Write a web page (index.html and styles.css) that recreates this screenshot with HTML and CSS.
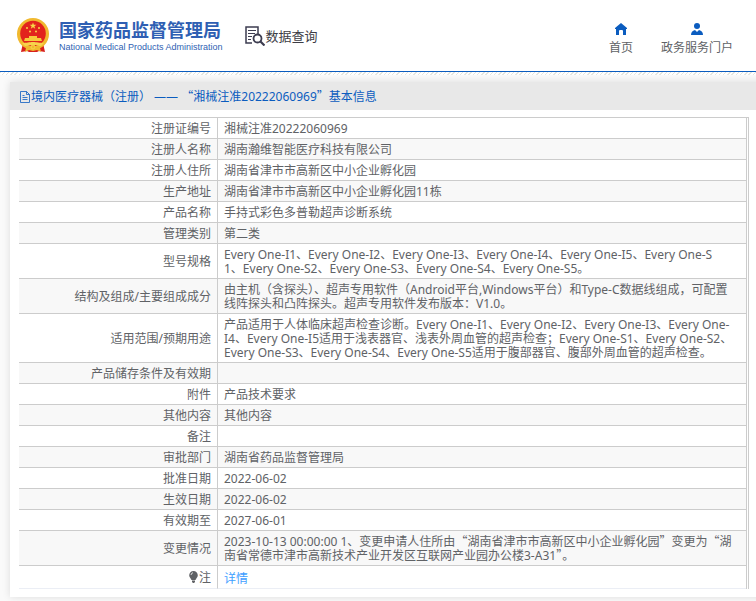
FILE: index.html
```html
<!DOCTYPE html>
<html lang="zh-CN">
<head>
<meta charset="utf-8">
<title>国家药品监督管理局 数据查询</title>
<link rel="stylesheet" href="styles.css">
</head>
<body>
<header class="top">
  <a class="brand" href="#">
    <svg class="emblem" viewBox="0 0 32 35" aria-hidden="true">
      <path d="M6 25h20l2 9-6-1-2 1h-8l-2-1-6 1z" fill="#d8201c"/>
      <circle cx="16" cy="16" r="16" fill="#f1b92f"/>
      <circle cx="16" cy="15.500" r="12.800" fill="#e2231d"/>
      <path d="M16 4.500l.9 2.300h2.500l-2 1.500.8 2.500-2.200-1.500-2.200 1.500.8-2.500-2-1.500h2.500z" fill="#f9d648"/>
      <g fill="#f9d648"><circle cx="10" cy="10" r="1"/><circle cx="22" cy="10" r="1"/><circle cx="13" cy="13.500" r="1"/><circle cx="19" cy="13.500" r="1"/></g>
      <path d="M12 18h8v2h4l1 3H7l1-3h4z" fill="#f7c93b"/>
      <path d="M5 25c5 0 7-1 11-1s6 1 11 1l-3 3c-3 0-4-1-8-1s-5 1-8 1z" fill="#f7d34c"/>
      <path d="M9 30l7-2 7 2 1 4-4-2-4 1-4-1-4 2z" fill="#f1b92f"/>
      <circle cx="16" cy="29" r="2" fill="#f1b92f" stroke="#f7d34c"/>
    </svg>
    <span class="names">
      <strong class="name-zh">国家药品监督管理局</strong>
      <span class="name-en">National Medical Products Administration</span>
    </span>
  </a>
  <a class="query" href="#">
    <svg class="query-icon" viewBox="0 0 20 20" fill="none" stroke="#3d3d50" aria-hidden="true">
      <path d="M7 17H1V1h12v7" stroke-width="1.500"/>
      <path d="M3 4.500h8M3 7.500h7M3 10.500h4M3 13.500h3" stroke-width="1.200"/>
      <circle cx="12.500" cy="12.500" r="4" stroke-width="1.800"/>
      <path d="M15.500 15.500l4 4" stroke-width="2.200"/>
    </svg>
    数据查询
  </a>
  <nav class="links">
    <a class="link" href="#">
      <svg class="link-icon" viewBox="0 0 12 12" aria-hidden="true"><path d="M6 0L0 5v1h1v6h3V8q0-1 1-1h2q1 0 1 1v4h3V6h1V5z" fill="#0b5cbf"/></svg>
      首页
    </a>
    <a class="link" href="#">
      <svg class="link-icon" viewBox="0 0 12 12" aria-hidden="true"><circle cx="6" cy="3" r="3" fill="#0b5cbf"/><path d="M0 12q0-4 4-5l2 2 2-2q4 1 4 5z" fill="#0b5cbf"/></svg>
      政务服务门户
    </a>
  </nav>
</header>
<main class="card">
  <h1 class="title">
    <svg class="doc" viewBox="0 0 10 12" fill="none" stroke="#0b5cbf" stroke-width=".8" aria-hidden="true"><path d="M.5.5h6l3 3v8h-9zM6.500.5v3h3M2.500 4.500h2M2.500 6.500h5M2.500 8.500h5"/></svg>
    <span>境内医疗器械（注册） —— <span class="zh">“</span>湘械注准20222060969<span class="zh">”</span>基本信息</span>
  </h1>
  <div class="frame">
    <table class="info">
      <tr><th scope="row">注册证编号</th><td>湘械注准20222060969</td></tr>
      <tr><th scope="row">注册人名称</th><td>湖南瀚维智能医疗科技有限公司</td></tr>
      <tr><th scope="row">注册人住所</th><td>湖南省津市市高新区中小企业孵化园</td></tr>
      <tr><th scope="row">生产地址</th><td>湖南省津市市高新区中小企业孵化园11栋</td></tr>
      <tr><th scope="row">产品名称</th><td>手持式彩色多普勒超声诊断系统</td></tr>
      <tr><th scope="row">管理类别</th><td>第二类</td></tr>
      <tr><th scope="row">型号规格</th><td>Every One-I1、Every One-I2、Every One-I3、Every One-I4、Every One-I5、Every One-S<br>1、Every One-S2、Every One-S3、Every One-S4、Every One-S5。</td></tr>
      <tr><th scope="row">结构及组成/主要组成成分</th><td>由主机（含探头）、超声专用软件（Android平台,Windows平台）和Type-C数据线组成，可配置<br>线阵探头和凸阵探头。超声专用软件发布版本：V1.0。</td></tr>
      <tr><th scope="row">适用范围/预期用途</th><td>产品适用于人体临床超声检查诊断。Every One-I1、Every One-I2、Every One-I3、Every One-<br>I4、Every One-I5适用于浅表器官、浅表外周血管的超声检查；Every One-S1、Every One-S2、<br>Every One-S3、Every One-S4、Every One-S5适用于腹部器官、腹部外周血管的超声检查。</td></tr>
      <tr><th scope="row">产品储存条件及有效期</th><td></td></tr>
      <tr><th scope="row">附件</th><td>产品技术要求</td></tr>
      <tr><th scope="row">其他内容</th><td>其他内容</td></tr>
      <tr><th scope="row">备注</th><td></td></tr>
      <tr><th scope="row">审批部门</th><td>湖南省药品监督管理局</td></tr>
      <tr><th scope="row">批准日期</th><td>2022-06-02</td></tr>
      <tr><th scope="row">生效日期</th><td>2022-06-02</td></tr>
      <tr><th scope="row">有效期至</th><td>2027-06-01</td></tr>
      <tr><th scope="row">变更情况</th><td>2023-10-13 00:00:00 1、变更申请人住所由<span class="zh">“</span>湖南省津市市高新区中小企业孵化园<span class="zh">”</span>变更为<span class="zh">“</span>湖<br>南省常德市津市高新技术产业开发区互联网产业园办公楼3-A31<span class="zh">”</span>。</td></tr>
      <tr class="note"><th scope="row"><svg class="bulb" viewBox="0 0 9 12" aria-hidden="true"><path d="M4.500 0a4.300 4.300 0 0 1 4.300 4.300C8.800 6.500 7 7.500 6.500 9h-4C2 7.500.2 6.500.2 4.300A4.300 4.300 0 0 1 4.500 0zM3 9.500h3v1.500l-1 1H4l-1-1z" fill="#606266"/><path d="M2 4q.3-2 2-2.300" stroke="#fff" fill="none" stroke-width=".8"/></svg>注</th><td><a class="detail" href="#">详情</a></td></tr>
    </table>
  </div>
</main>
</body>
</html>
```
FILE: styles.css
```css
* { box-sizing: border-box; }
body {
  margin: 0;
  background: #fafafa;
  color: #606266;
  font: 12px/14px "Noto Sans", "Noto Sans CJK SC", sans-serif;
  overflow-x: hidden;
}
a { color: inherit; text-decoration: none; }
.zh { font-family: "Noto Sans CJK SC", sans-serif; line-height: 0; }

.top {
  display: flex;
  align-items: center;
  height: 72px;
  padding: 0 23px 0 17px;
  background: #fff;
  border-bottom: 1px solid #0b5cbf;
}
.top + .card::before {
  content: "";
  display: block;
  height: 3px;
  margin: -10px 0 7px -10px;
  background: repeating-linear-gradient(135deg, #e4e6e0 0 1px, #fff 1px 3px);
}
.brand { display: flex; align-items: center; gap: 10px; color: #2f5fb3; }
.emblem { width: 32px; height: 35px; }
.names { display: flex; flex-direction: column; }
.name-zh { font-size: 18px; line-height: 22px; }
.name-en { font: 9px/12px "Liberation Sans", sans-serif; white-space: nowrap; }
.query {
  display: flex;
  align-items: center;
  gap: 1px;
  margin-left: 22px;
  font-size: 13px;
  color: #3d3d45;
}
.query-icon { width: 20px; height: 20px; }
.links { display: flex; gap: 28px; margin-left: auto; padding-top: 7px; }
.link {
  display: flex;
  flex-direction: column;
  align-items: center;
  gap: 5px;
  line-height: 16px;
}
.link-icon { width: 12px; height: 12px; }

.card {
  display: flow-root;
  margin: 10px -10px 5px 10px;
  padding-bottom: 8px;
  background: #fff;
  box-shadow: 0 0 8px rgba(0, 0, 0, .12);
}
.title {
  display: flex;
  align-items: center;
  gap: 1px;
  height: 28px;
  margin: 0 0 7px;
  padding: 1px 0 0 10px;
  background: #e8e8e8;
  color: #0b5cbf;
  font-size: 12px;
  font-weight: 400;
}
.doc { width: 10px; height: 12px; }
.frame {
  margin: 0 17px 0 9px;
  padding-right: 1px;
  border-top: 1px solid #ccc;
  border-right: 1px solid #ccc;
}
.info { width: 100%; border-collapse: separate; border-spacing: 0; border-right: 1px solid #ccc; }
.info th, .info td {
  height: 21px;
  padding: 4px 6px 2px;
  border-bottom: 1px solid #ccc;
  font-weight: 400;
  white-space: nowrap;
}
.info th { width: 199px; border-right: 1px solid #ccc; text-align: right; }
.info td { text-align: left; }
.info tr:nth-child(even) { background: #f8f8f8; }
.info .note th, .info .note td { height: 23px; border-bottom-color: #ebeef5; }
.info .note td { padding-top: 6px; }
.detail { color: #409eff; }
.bulb { width: 9px; height: 12px; margin-right: 1px; vertical-align: -1px; }
```
